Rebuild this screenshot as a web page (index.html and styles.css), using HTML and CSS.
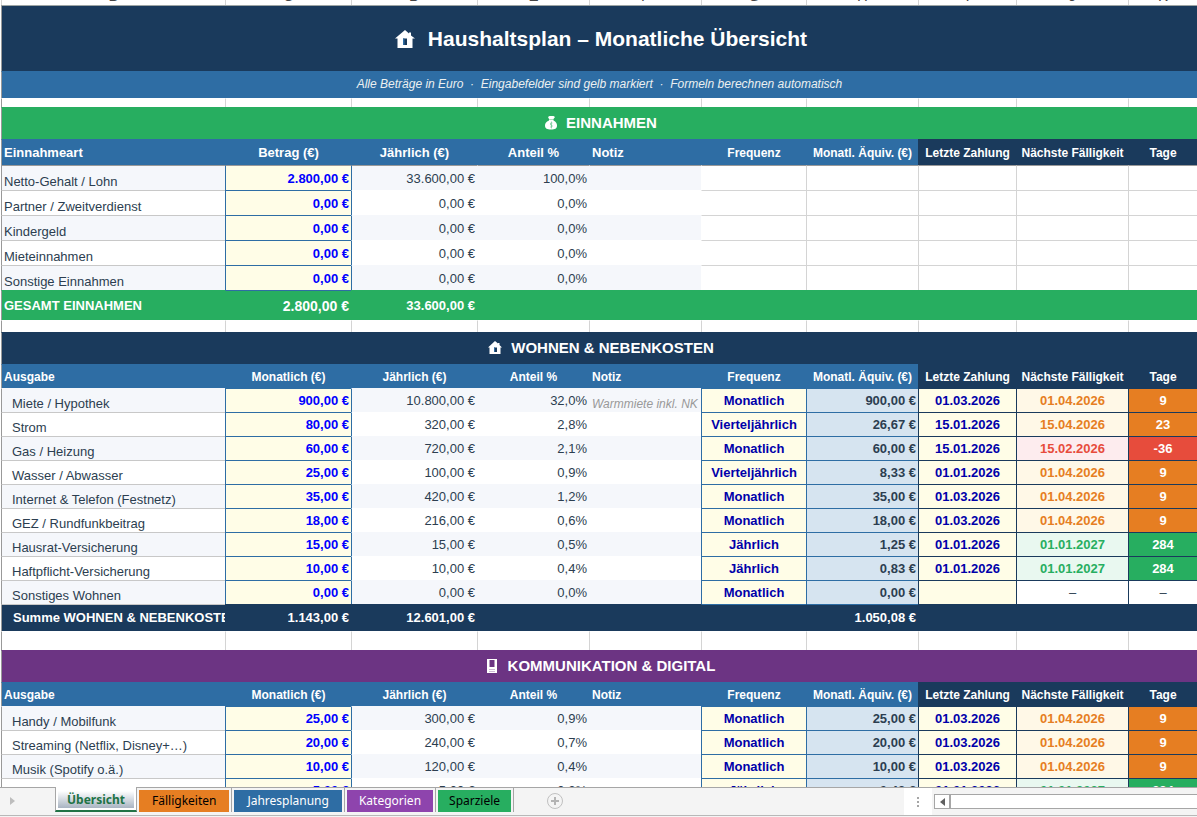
FILE: index.html
```html
<!DOCTYPE html>
<html lang="de">
<head>
<meta charset="utf-8">
<title>Haushaltsplan</title>
<link rel="stylesheet" href="styles.css">
</head>
<body>
<main class="sheet">
<table class="grid">
<colgroup><col class="w-label"><col class="w-amount"><col class="w-amount"><col class="w-mid"><col class="w-mid"><col class="w-freq"><col class="w-mid"><col class="w-date"><col class="w-mid"><col></colgroup>
<tbody>
<tr class="letters"><th><div>B</div></th><th><div>C</div></th><th><div>D</div></th><th><div>E</div></th><th><div>F</div></th><th><div>G</div></th><th><div>H</div></th><th><div>I</div></th><th><div>J</div></th><th><div>K</div></th></tr>
<tr class="title"><th colspan="10"><h1><svg class="icon-title" viewBox="0 0 20 18"><path fill="#fff" fill-rule="evenodd" d="M10 0 14 3.500V2.500h2v3L20 8.500H17.500V18H2.500V8.500H0zM8 8.500v6.500h4V8.500z"/><path fill="#2e6da4" d="M8 8.500h1.500V15H8z"/></svg>Haushaltsplan – Monatliche Übersicht</h1></th></tr>
<tr class="subtitle"><td colspan="10">Alle Beträge in Euro &nbsp;·&nbsp; Eingabefelder sind gelb markiert &nbsp;·&nbsp; Formeln berechnen automatisch</td></tr>
<tr class="gap gap-s"><td></td><td></td><td></td><td></td><td></td><td></td><td></td><td></td><td></td><td></td></tr>

<tr class="section green"><th colspan="10"><h2><svg class="icon-bag" viewBox="0 0 12 14"><path fill="#fff" d="M3 1l1.500-1h4L10 1 8.500 3v1.500C11 5.500 12 7.500 12 9.500c0 3-2 4-6 4s-6-1-6-4c0-2 1-4 4-5V3z"/><path fill="none" stroke="#27ae60" stroke-opacity=".4" d="M4 3.500h5M7.500 7h-2v2h1.500v2h-2M6.500 5.500v7"/></svg>EINNAHMEN</h2></th></tr>
<tr class="head head-main"><th>Einnahmeart</th><th>Betrag (€)</th><th>Jährlich (€)</th><th>Anteil %</th><th>Notiz</th><th>Frequenz</th><th>Monatl. Äquiv. (€)</th><th>Letzte Zahlung</th><th>Nächste Fälligkeit</th><th>Tage</th></tr>
<tr class="income odd first"><td>Netto-Gehalt / Lohn</td><td>2.800,00 €</td><td>33.600,00 €</td><td>100,0%</td><td></td><td></td><td></td><td></td><td></td><td></td></tr>
<tr class="income"><td>Partner / Zweitverdienst</td><td>0,00 €</td><td>0,00 €</td><td>0,0%</td><td></td><td></td><td></td><td></td><td></td><td></td></tr>
<tr class="income odd"><td>Kindergeld</td><td>0,00 €</td><td>0,00 €</td><td>0,0%</td><td></td><td></td><td></td><td></td><td></td><td></td></tr>
<tr class="income"><td>Mieteinnahmen</td><td>0,00 €</td><td>0,00 €</td><td>0,0%</td><td></td><td></td><td></td><td></td><td></td><td></td></tr>
<tr class="income odd"><td>Sonstige Einnahmen</td><td>0,00 €</td><td>0,00 €</td><td>0,0%</td><td></td><td></td><td></td><td></td><td></td><td></td></tr>
<tr class="total"><th>GESAMT EINNAHMEN</th><td>2.800,00 €</td><td>33.600,00 €</td><td></td><td></td><td></td><td></td><td></td><td></td><td></td></tr>
<tr class="gap gap-m"><td></td><td></td><td></td><td></td><td></td><td></td><td></td><td></td><td></td><td></td></tr>

<tr class="section navy"><th colspan="10"><h2><svg class="icon-home" viewBox="0 0 14 13"><path fill="#fff" fill-rule="evenodd" d="M7 0 10 2.500V2h1.500v2L14 6.500H12.500V13h-11V6.500H0zM6 6.500v4.500h3V6.500z"/><path fill="#2e6da4" d="M6 6.500h1V11H6z"/></svg>WOHNEN &amp; NEBENKOSTEN</h2></th></tr>
<tr class="head"><th>Ausgabe</th><th>Monatlich (€)</th><th>Jährlich (€)</th><th>Anteil %</th><th>Notiz</th><th>Frequenz</th><th>Monatl. Äquiv. (€)</th><th>Letzte Zahlung</th><th>Nächste Fälligkeit</th><th>Tage</th></tr>
<tr class="cost odd first soon"><td>Miete / Hypothek</td><td>900,00 €</td><td>10.800,00 €</td><td>32,0%</td><td>Warmmiete inkl. NK</td><td>Monatlich</td><td>900,00 €</td><td>01.03.2026</td><td>01.04.2026</td><td>9</td></tr>
<tr class="cost soon"><td>Strom</td><td>80,00 €</td><td>320,00 €</td><td>2,8%</td><td></td><td>Vierteljährlich</td><td>26,67 €</td><td>15.01.2026</td><td>15.04.2026</td><td>23</td></tr>
<tr class="cost odd late"><td>Gas / Heizung</td><td>60,00 €</td><td>720,00 €</td><td>2,1%</td><td></td><td>Monatlich</td><td>60,00 €</td><td>15.01.2026</td><td>15.02.2026</td><td>-36</td></tr>
<tr class="cost soon"><td>Wasser / Abwasser</td><td>25,00 €</td><td>100,00 €</td><td>0,9%</td><td></td><td>Vierteljährlich</td><td>8,33 €</td><td>01.01.2026</td><td>01.04.2026</td><td>9</td></tr>
<tr class="cost odd soon"><td>Internet &amp; Telefon (Festnetz)</td><td>35,00 €</td><td>420,00 €</td><td>1,2%</td><td></td><td>Monatlich</td><td>35,00 €</td><td>01.03.2026</td><td>01.04.2026</td><td>9</td></tr>
<tr class="cost soon"><td>GEZ / Rundfunkbeitrag</td><td>18,00 €</td><td>216,00 €</td><td>0,6%</td><td></td><td>Monatlich</td><td>18,00 €</td><td>01.03.2026</td><td>01.04.2026</td><td>9</td></tr>
<tr class="cost odd fine"><td>Hausrat-Versicherung</td><td>15,00 €</td><td>15,00 €</td><td>0,5%</td><td></td><td>Jährlich</td><td>1,25 €</td><td>01.01.2026</td><td>01.01.2027</td><td>284</td></tr>
<tr class="cost fine"><td>Haftpflicht-Versicherung</td><td>10,00 €</td><td>10,00 €</td><td>0,4%</td><td></td><td>Jährlich</td><td>0,83 €</td><td>01.01.2026</td><td>01.01.2027</td><td>284</td></tr>
<tr class="cost odd"><td>Sonstiges Wohnen</td><td>0,00 €</td><td>0,00 €</td><td>0,0%</td><td></td><td>Monatlich</td><td>0,00 €</td><td></td><td>–</td><td>–</td></tr>
<tr class="sum"><th>Summe WOHNEN &amp; NEBENKOSTEN</th><td>1.143,00 €</td><td>12.601,00 €</td><td></td><td></td><td></td><td>1.050,08 €</td><td></td><td></td><td></td></tr>
<tr class="gap gap-l"><td></td><td></td><td></td><td></td><td></td><td></td><td></td><td></td><td></td><td></td></tr>

<tr class="section purple"><th colspan="10"><h2><svg class="icon-phone" viewBox="0 0 10 14"><path fill="#fff" fill-rule="evenodd" d="M0 0h10v14H0zM2.500 1v7h5V1z"/><path stroke="#6c3483" stroke-opacity=".35" d="M2 10.500h6M2 12.500h6"/></svg>KOMMUNIKATION &amp; DIGITAL</h2></th></tr>
<tr class="head"><th>Ausgabe</th><th>Monatlich (€)</th><th>Jährlich (€)</th><th>Anteil %</th><th>Notiz</th><th>Frequenz</th><th>Monatl. Äquiv. (€)</th><th>Letzte Zahlung</th><th>Nächste Fälligkeit</th><th>Tage</th></tr>
<tr class="cost odd first soon"><td>Handy / Mobilfunk</td><td>25,00 €</td><td>300,00 €</td><td>0,9%</td><td></td><td>Monatlich</td><td>25,00 €</td><td>01.03.2026</td><td>01.04.2026</td><td>9</td></tr>
<tr class="cost soon"><td>Streaming (Netflix, Disney+…)</td><td>20,00 €</td><td>240,00 €</td><td>0,7%</td><td></td><td>Monatlich</td><td>20,00 €</td><td>01.03.2026</td><td>01.04.2026</td><td>9</td></tr>
<tr class="cost odd soon"><td>Musik (Spotify o.ä.)</td><td>10,00 €</td><td>120,00 €</td><td>0,4%</td><td></td><td>Monatlich</td><td>10,00 €</td><td>01.03.2026</td><td>01.04.2026</td><td>9</td></tr>
<tr class="cost fine"><td></td><td>5,00 €</td><td>5,00 €</td><td>0,2%</td><td></td><td>Jährlich</td><td>0,42 €</td><td>01.01.2026</td><td>01.01.2027</td><td>284</td></tr>
</tbody>
</table>
</main>
<footer class="bar">
<button class="nav" type="button" aria-label="Weiter"><svg width="5" height="8" viewBox="0 0 5 8"><path fill="#bdbdbd" d="M0 0l5 4-5 4z"/></svg></button>
<nav class="tabs">
<button class="tab active" type="button"><span>Übersicht</span></button>
<button class="tab t-orange" type="button"><span>Fälligkeiten</span></button>
<button class="tab t-blue" type="button"><span>Jahresplanung</span></button>
<button class="tab t-purple" type="button"><span>Kategorien</span></button>
<button class="tab t-green" type="button"><span>Sparziele</span></button>
</nav>
<button class="add" type="button" aria-label="Neues Blatt"><svg width="16" height="16" viewBox="0 0 16 16"><circle cx="8" cy="8" r="7.500" fill="none" stroke="#c0c0c0"/><path stroke="#b4b4b4" stroke-width="2" d="M4 8h8M8 4v8"/></svg></button>
<div class="grip"><svg width="2" height="10" viewBox="0 0 2 10"><path fill="#a6a6a6" d="M0 0h2v2H0zM0 4h2v2H0zM0 8h2v2H0z"/></svg></div>
<div class="scroll"><button type="button" aria-label="Nach links"><svg width="5" height="8" viewBox="0 0 5 8"><path fill="#606060" d="M5 0L0 4l5 4z"/></svg></button><div class="thumb"></div></div>
</footer>
</body>
</html>
```
FILE: styles.css
```css
* { box-sizing: border-box; }
body {
  margin: 0;
  padding-bottom: 1px;
  height: 100vh;
  display: flex;
  flex-direction: column;
  background: #f4f4f4;
  color: #2c3e50;
  font: 13px/16px "Liberation Sans", Arial, sans-serif;
}
.sheet { flex: 1; min-height: 0; overflow: hidden; padding-left: 1px; background: #fff; }

/* Grid: each cell draws its own top and left line */
.grid { width: 100%; table-layout: fixed; border-collapse: separate; border-spacing: 0; }
.w-label { width: 224px; }
.w-amount { width: 126px; }
.w-mid { width: 112px; }
.w-freq { width: 105px; }
.w-date { width: 98px; }
td, th {
  padding: 0 2px;
  border: 0 solid transparent;
  border-width: 1px 0 0 1px;
  overflow: hidden;
  white-space: nowrap;
  vertical-align: middle;
}
tr > :first-child { border-left-color: #999; }
h1, h2 { margin: 0; padding-left: 3px; display: flex; align-items: center; justify-content: center; color: #fff; }

.letters th { height: 5px; padding: 0; border-top: 0; border-left-color: #d4d4d4; font-weight: 400; }
.letters div {
  height: 5px;
  padding-bottom: 2px;
  overflow: hidden;
  display: flex;
  align-items: flex-end;
  justify-content: center;
  font-size: 15px;
  line-height: 14px;
  color: #444;
}
.title th { height: 66px; background: #1a3a5c; background-clip: padding-box; border-top-color: #9da5a5; }
h1 { gap: 13px; font-size: 21px; line-height: 24px; }
.icon-title { width: 20px; height: 18px; }
.subtitle td { height: 27px; padding-bottom: 3px; background: #2e6da4; color: #ecf0f1; font-size: 12px; font-style: italic; text-align: center; }
.gap td { padding: 0; border-left-color: #d4d4d4; }
.gap td:first-child { border-left-color: #999; }
.gap-s td { height: 9px; }
.gap-m td { height: 12px; }
.gap-l td { height: 19px; }

.section th { height: 32px; padding-bottom: 2px; }
h2 { gap: 9px; font-size: 15px; line-height: 18px; }
.icon-bag { width: 12px; height: 14px; }
.icon-home { width: 14px; height: 13px; }
.icon-phone { width: 10px; height: 14px; margin-right: 2px; }
.green th { background: #27ae60; }
.navy th { background: #1a3a5c; }
.purple th { background: #6c3483; }

.head th { height: 24px; background: #2e6da4; color: #fff; font-size: 12px; }
.head th:nth-child(1), .head th:nth-child(5) { text-align: left; }
.head th:nth-child(n+8) { background: #1a3a5c; }
.head-main th { height: 26px; }
.head-main th:nth-child(-n+5) { font-size: 13px; }

/* Data rows */
.income td { height: 25px; padding-top: 2px; }
.cost td { height: 24px; }
.odd td:nth-child(-n+5) { background: #f5f7fb; }
.income td:first-child, .cost td:first-child { padding-top: 6px; border-top-color: #c8c8c8; }
.income td:first-child { padding-top: 8px; }
.cost td:first-child { padding-left: 10px; }
.cost.first td:first-child { border-top-color: transparent; }
.income td:nth-child(n+2), .cost td:nth-child(n+2) { text-align: right; }
.grid .income td:nth-child(2), .grid .cost td:nth-child(2) {
  background: #fffde7;
  border-color: #2e6da4;
  color: #00f;
  font-weight: 700;
}
.income td:nth-child(3), .cost td:nth-child(3) { border-left-color: #2e6da4; }
.income td:nth-child(n+6) { border-color: #d4d4d4; }
.income td:nth-child(6) { border-left-color: transparent; }
.grid .income.first td { border-top-color: #999; }

.grid .cost td:nth-child(5) { padding-top: 6px; color: #999; font-size: 12px; font-style: italic; text-align: left; }
.cost td:nth-child(n+6) { font-weight: 700; }
.grid .cost td:nth-child(6) { padding: 0; background: #fffde7; border-color: #2e6da4; color: #00a; text-align: center; }
.cost td:nth-child(7) { background: #d6e4f0; border-color: #2e6da4; }
.grid .cost td:nth-child(n+8) { border-color: #1a3a5c; text-align: center; }
.cost td:nth-child(8) { background: #fffde7; color: #00a; }
.cost td:nth-child(n+9) { font-weight: 400; }
.soon td:nth-child(n+9), .late td:nth-child(n+9), .fine td:nth-child(n+9) { font-weight: 700; }
.soon td:nth-child(9) { background: #fff8e7; color: #e67e22; }
.late td:nth-child(9) { background: #fdecee; color: #e74c3c; }
.fine td:nth-child(9) { background: #e9f8f0; color: #27ae60; }
.soon td:nth-child(10) { background: #e67e22; color: #fff; }
.late td:nth-child(10) { background: #e74c3c; color: #fff; }
.fine td:nth-child(10) { background: #27ae60; color: #fff; }

.total > *, .sum > * { color: #fff; font-weight: 700; text-align: right; }
.total > :first-child, .sum > :first-child { text-align: left; }
.total > * { height: 30px; background: #27ae60; }
.total td:nth-child(2) { border-top-color: #2e6da4; font-size: 14px; }
.sum > * { height: 27px; background: #1a3a5c; }
.sum > :first-child { padding-left: 11px; padding-right: 0; border-top-color: #c8c8c8; text-overflow: clip; }
.sum td:nth-child(6), .sum td:nth-child(7) { border-top-color: #2e6da4; }

/* Sheet tabs */
.bar {
  flex: none;
  height: 29px;
  display: flex;
  align-items: flex-start;
  border-top: 1px solid #a6a6a6;
  border-bottom: 1px solid #b8b8b8;
}
button { margin: 0; padding: 0; border: 0; background: none; }
.nav { width: 55px; height: 26px; padding-left: 10px; display: flex; align-items: center; }
.tabs { display: flex; }
.tab {
  height: 24px;
  padding: 2px 2px 0;
  border-right: 1px solid #a6a6a6;
  color: #fff;
  font: 12px/22px "Noto Sans", sans-serif;
}
.tab span { display: block; padding: 0 13px; }
.tab.active {
  height: 25px;
  margin-top: -1px;
  padding: 4px 2px 2px;
  background: #fff;
  border-left: 1px solid #a6a6a6;
  border-bottom: 2px solid #217346;
  color: #217346;
  font-weight: 700;
  line-height: 17px;
}
.tab.active span { padding: 0 9px; background: linear-gradient(#fff, #a9b4c2); }
.t-orange span { background: #e67e22; color: #000; }
.t-blue span { background: #2e6da4; }
.tab.t-purple span { padding: 0 12px; background: #8e44ad; }
.tab.t-green span { padding: 0 11px; background: #27ae60; color: #000; }
.add { margin-left: 33px; height: 26px; display: flex; align-items: center; }
.grip { width: 28px; height: 27px; margin-left: auto; background: #fff; display: flex; align-items: center; justify-content: center; }
.scroll { width: 263px; height: 15px; margin: 6px 0 0 2px; display: flex; background: #fff; border: 1px solid #a6a6a6; border-right: 0; }
.scroll button { width: 14px; display: flex; align-items: center; justify-content: center; }
.thumb { flex: 1; border-left: 2px solid #a6a6a6; }
```
